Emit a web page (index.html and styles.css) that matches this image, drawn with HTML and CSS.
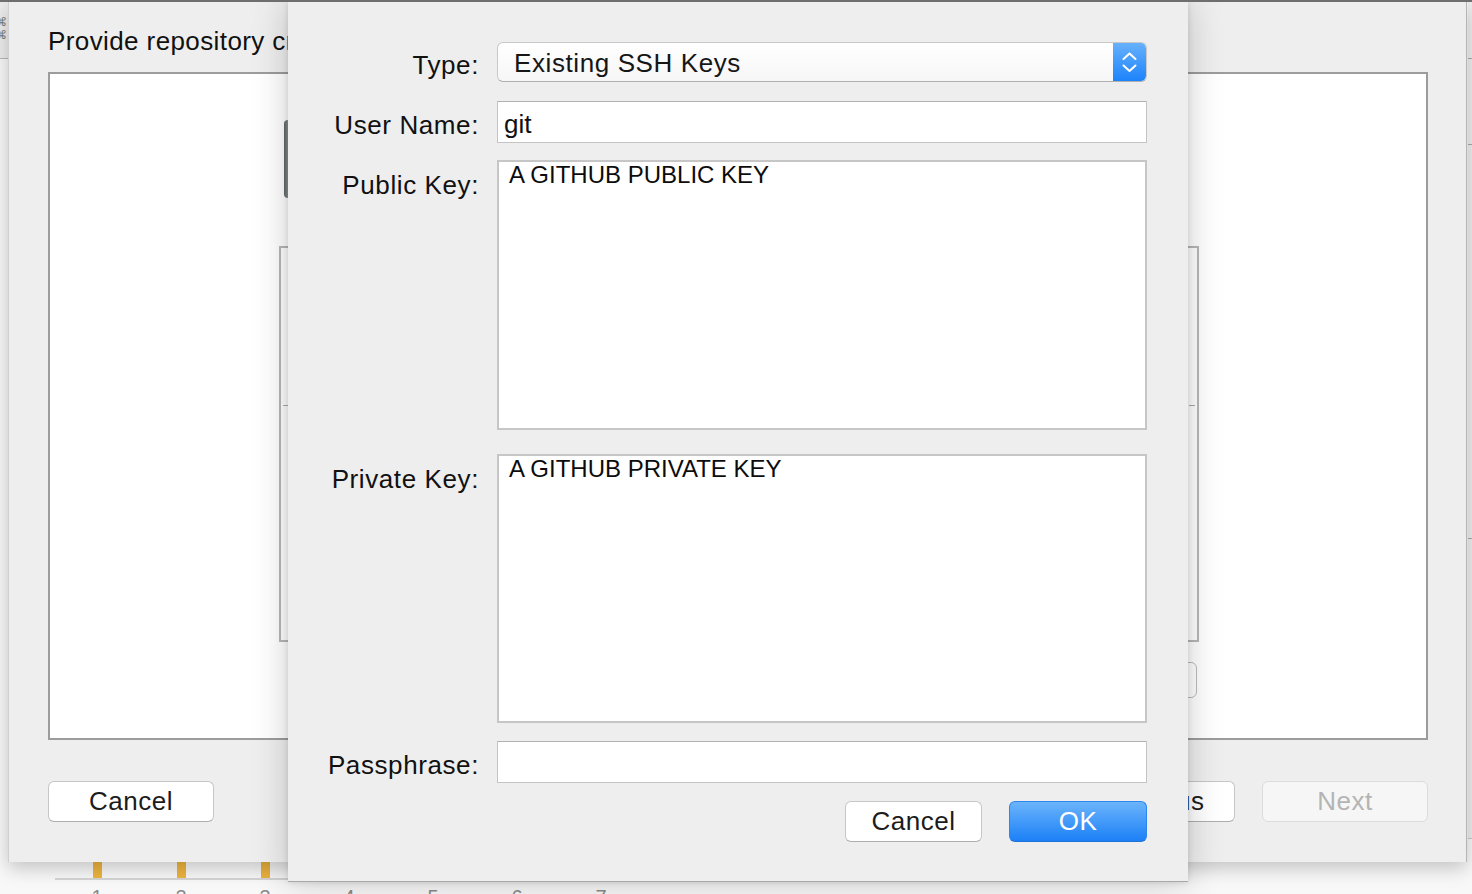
FILE: index.html
```html
<!DOCTYPE html>
<html lang="en">
<head>
  <meta charset="UTF-8">
  <title>Provide repository credentials</title>
  <link rel="stylesheet" href="styles.css">
</head>
<body>

<div class="desktop">
  <div class="topline"></div>

  <div class="backwin">
    <div class="side-strip">
      <span class="side-glyph">⌘<br>⌘</span>
    </div>
    <div class="chart">
      <div class="col"><div class="bar"></div><div class="num">1</div></div>
      <div class="col"><div class="bar"></div><div class="num">2</div></div>
      <div class="col"><div class="bar"></div><div class="num">3</div></div>
      <div class="col"><div class="bar"></div><div class="num">4</div></div>
      <div class="col"><div class="bar"></div><div class="num">5</div></div>
      <div class="col"><div class="bar"></div><div class="num">6</div></div>
      <div class="col"><div class="bar"></div><div class="num">7</div></div>
    </div>
  </div>

  <div class="sidewin">
    <div class="sidewin-line l1"></div>
    <div class="sidewin-line l2"></div>
    <div class="sidewin-line l3"></div>
  </div>

  <!-- assistant sheet behind the credentials dialog -->
  <div class="sheet">
    <h1 class="sheet-title">Provide repository credentials</h1>
    <div class="sheet-box">
      <div class="box-thumb"></div>
      <div class="box-panel">
        <div class="panel-tick"></div>
      </div>
      <div class="box-actions">
        <button class="small-btn">Choose…</button>
      </div>
    </div>
    <div class="sheet-buttons">
      <button class="btn">Cancel</button>
      <div class="sheet-nav">
        <button class="btn">Previous</button>
        <button class="btn btn-disabled">Next</button>
      </div>
    </div>
  </div>

  <!-- credentials dialog -->
  <div class="dialog">
    <div class="row row-single gap-19">
      <label class="lbl">Type:</label>
      <div class="popup">
        <span class="popup-value">Existing SSH Keys</span>
        <span class="stepper">
          <svg width="33" height="40" viewBox="0 0 33 40">
            <path d="M10.5 17 L16.5 11.5 L22.5 17" fill="none" stroke="#fff" stroke-width="2" stroke-linecap="round" stroke-linejoin="round"/>
            <path d="M10.5 23.5 L16.5 29 L22.5 23.5" fill="none" stroke="#fff" stroke-width="2" stroke-linecap="round" stroke-linejoin="round"/>
          </svg>
        </span>
      </div>
    </div>

    <div class="row row-single gap-17">
      <label class="lbl">User Name:</label>
      <input class="field" type="text" value="git">
    </div>

    <div class="row gap-24">
      <label class="lbl lbl-top">Public Key:</label>
      <textarea class="area area-pub">A GITHUB PUBLIC KEY</textarea>
    </div>

    <div class="row gap-18">
      <label class="lbl lbl-top">Private Key:</label>
      <textarea class="area area-priv">A GITHUB PRIVATE KEY</textarea>
    </div>

    <div class="row row-single gap-18">
      <label class="lbl">Passphrase:</label>
      <input class="field" type="password" value="">
    </div>

    <div class="dialog-buttons">
      <button class="btn btn-dlg">Cancel</button>
      <button class="btn btn-dlg btn-primary">OK</button>
    </div>
  </div>
</div>

</body>
</html>
```

FILE: styles.css
```css
html, body {
  margin: 0;
  padding: 0;
  height: 100%;
  overflow: hidden;
  font-family: "Liberation Sans", Arial, sans-serif;
  background: #f7f7f7;
  color: #141414;
}

.desktop {
  position: relative;
  width: 1472px;
  height: 894px;
  overflow: hidden;
}

.topline {
  position: absolute;
  top: 0;
  left: 0;
  right: 0;
  height: 2px;
  background: #6e6e6e;
  z-index: 20;
}

/* window lying at the very back */
.backwin {
  position: absolute;
  inset: 0;
  background: #f8f8f8;
}

.side-strip {
  position: absolute;
  left: 0;
  top: 0;
  width: 8px;
  height: 58px;
  background: #ececec;
  border-bottom: 1px solid #b8b8b8;
  overflow: hidden;
}

.side-glyph {
  position: absolute;
  left: -5px;
  top: 16px;
  font-size: 12px;
  line-height: 13px;
  color: #777;
}

.chart {
  position: absolute;
  left: 55px;
  top: 862px;
  display: flex;
}

.chart .col {
  width: 84px;
  display: flex;
  flex-direction: column;
  align-items: center;
}

.chart .bar {
  width: 9px;
  height: 16px;
  background: #eeb43f;
}

.chart .num {
  width: 84px;
  border-top: 2px solid #d4d4d4;
  text-align: center;
  font-size: 20px;
  color: #8a8a8a;
  padding-top: 6px;
}

.sidewin {
  position: absolute;
  left: 1468px;
  top: 2px;
  width: 4px;
  height: 836px;
  background: #eeeeee;
  border-bottom: 1px solid #c8c8c8;
}

.sidewin-line {
  position: absolute;
  left: 0;
  width: 4px;
  height: 1px;
  background: #a8a8a8;
}

.sidewin-line.l1 { top: 56px; }
.sidewin-line.l2 { top: 142px; }
.sidewin-line.l3 { top: 536px; }

/* assistant sheet */
.sheet {
  position: absolute;
  left: 8px;
  top: 2px;
  width: 1459px;
  height: 860px;
  background: #eeeeee;
  border-right: 1px solid #b4b4b4;
  border-left: 1px solid #cfcfcf;
  box-shadow: 0 6px 18px rgba(0, 0, 0, 0.22);
  box-sizing: border-box;
  padding: 21px 0 0 39px;
  display: flex;
  flex-direction: column;
  z-index: 5;
}

.sheet-title {
  margin: 0;
  font-weight: normal;
  font-size: 26px;
  line-height: 36px;
  letter-spacing: 0.4px;
  color: #111;
}

.sheet-box {
  position: relative;
  margin-top: 13px;
  width: 1380px;
  height: 668px;
  box-sizing: border-box;
  background: #fff;
  border: 2px solid #9c9c9c;
}

.box-thumb {
  position: absolute;
  left: 234px;
  top: 46px;
  width: 40px;
  height: 78px;
  border-radius: 4px;
  background: linear-gradient(to right, #5e6466, #b8bfc2 20%, #e6e8ea);
}

.box-panel {
  position: absolute;
  left: 229px;
  top: 172px;
  width: 920px;
  height: 396px;
  box-sizing: border-box;
  border: 2px solid #b7b7b7;
}

.panel-tick {
  margin-top: 157px;
  margin-left: 2px;
  width: 912px;
  height: 1px;
  border-left: 6px solid #aaa;
  border-right: 6px solid #aaa;
  box-sizing: border-box;
}

.box-actions {
  position: absolute;
  top: 588px;
  right: 229px;
}

.small-btn {
  height: 36px;
  padding: 0 30px;
  font-family: inherit;
  font-size: 22px;
  background: #fff;
  border: 1px solid #bcbcbc;
  border-radius: 6px;
}

.sheet-buttons {
  margin-top: 41px;
  width: 1380px;
  display: flex;
  justify-content: space-between;
}

.sheet-nav {
  display: flex;
  gap: 27px;
}

.btn {
  width: 166px;
  height: 41px;
  box-sizing: border-box;
  font-family: inherit;
  font-size: 26px;
  letter-spacing: 0.5px;
  color: #1c1c1c;
  background: #fff;
  border: 1px solid #c6c6c6;
  border-bottom-color: #aeaeae;
  border-radius: 6px;
  padding: 0;
}

.btn-disabled {
  background: #f6f6f6;
  color: #b4b4b4;
  border-color: #dcdcdc;
}

/* credentials dialog */
.dialog {
  position: absolute;
  left: 288px;
  top: 2px;
  width: 900px;
  height: 880px;
  box-sizing: border-box;
  background: #eeeeee;
  border-bottom: 1px solid #a9a9a9;
  box-shadow: 0 0 34px rgba(0, 0, 0, 0.2), 0 0 6px rgba(0, 0, 0, 0.12);
  padding-top: 40px;
  display: flex;
  flex-direction: column;
  z-index: 10;
}

.row {
  display: flex;
  align-items: flex-start;
  gap: 18px;
}

.row-single {
  align-items: center;
}

.gap-17 { margin-bottom: 17px; }
.gap-18 { margin-bottom: 18px; }
.gap-19 { margin-bottom: 19px; }
.gap-24 { margin-bottom: 24px; }

.lbl {
  width: 191px;
  flex: none;
  text-align: right;
  font-size: 26px;
  line-height: 30px;
  letter-spacing: 0.6px;
  color: #111;
}

.row-single .lbl {
  padding-top: 5px;
}

.lbl-top {
  margin-top: 10px;
}

.popup {
  width: 650px;
  height: 40px;
  box-sizing: border-box;
  display: flex;
  align-items: center;
  justify-content: space-between;
  background: linear-gradient(#ffffff, #f6f6f6);
  border: 1px solid #c8c8c8;
  border-bottom-color: #b0b0b0;
  border-radius: 6px;
  overflow: hidden;
}

.popup-value {
  padding-left: 16px;
  padding-top: 2px;
  font-size: 26px;
  letter-spacing: 0.6px;
  color: #161616;
}

.stepper {
  width: 33px;
  height: 40px;
  display: flex;
  background: linear-gradient(#69b2fb, #1b82fb);
  border-radius: 0 6px 6px 0;
}

.field {
  width: 650px;
  height: 42px;
  box-sizing: border-box;
  margin: 0;
  padding: 4px 6px 0;
  font-family: inherit;
  font-size: 26px;
  color: #111;
  background: #fff;
  border: 1px solid #c4c4c4;
  border-top-color: #b2b2b2;
  border-radius: 0;
  outline: none;
}

.area {
  width: 650px;
  box-sizing: border-box;
  margin: 0;
  padding: 0 10px;
  font-family: inherit;
  font-size: 24px;
  line-height: 26px;
  color: #0c0c0c;
  background: #fff;
  border: 2px solid #c6c6c6;
  border-radius: 0;
  resize: none;
  outline: none;
  overflow: hidden;
}

.area-pub { height: 270px; }
.area-priv { height: 269px; }

.dialog-buttons {
  width: 859px;
  display: flex;
  justify-content: flex-end;
  gap: 27px;
}

.btn-dlg {
  width: 137px;
}

.btn-primary {
  width: 138px;
  color: #fff;
  background: linear-gradient(#6bb4fb, #1c80f7);
  border: 1px solid #2b86ee;
  border-bottom-color: #1f73d6;
}
```
